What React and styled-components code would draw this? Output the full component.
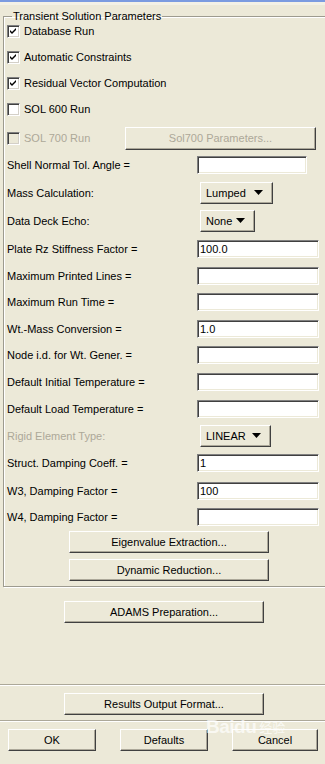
import React from 'react';
import styled, { createGlobalStyle, css } from 'styled-components';

const GlobalStyle = createGlobalStyle`
  html, body {
    margin: 0;
    padding: 0;
    background: #ece9d8;
    overflow: hidden;
  }
  body {
    font-family: "Liberation Sans", Arial, sans-serif;
    font-size: 11px;
    color: #000;
  }
`;

const Window = styled.div`
  position: relative;
  width: 325px;
  height: 764px;
  overflow: hidden;
  background: #ece9d8;
  display: flex;
  flex-direction: column;
`;

const TopEdge = styled.div`
  height: 2px;
  background: #7b9be0;
  border-bottom: 3px solid #f3f1e6;
`;

const Group = styled.fieldset`
  margin: 5px 0 0 3px;
  padding: 0 0 5px 3px;
  width: 330px;
  box-sizing: border-box;
  border: 1px solid #9d9b8f;
  box-shadow: inset 1px 1px 0 #fff, 1px 1px 0 #fff;
  min-inline-size: 0;
`;

const Legend = styled.legend`
  padding: 0 1px;
  margin-left: 5px;
  line-height: 12px;
  font-size: 11px;
`;

const CheckList = styled.div`
  display: flex;
  flex-direction: column;
  gap: 8px;
`;

const CheckRow = styled.div`
  display: grid;
  grid-template-columns: ${p => (p.$withButton ? '118px 191px' : 'auto')};
  align-items: center;
  height: ${p => (p.$withButton ? '24px' : '18px')};
`;

const CheckItem = styled.label`
  display: flex;
  align-items: center;
  gap: 4px;
  color: ${p => (p.$disabled ? '#aca899' : '#000')};
`;

const Box = styled.span`
  width: 13px;
  height: 13px;
  box-sizing: border-box;
  display: inline-flex;
  align-items: center;
  justify-content: center;
  background: ${p => (p.$disabled ? '#ece9d8' : '#fff')};
  border: 1px solid;
  border-color: #808080 #fff #fff #808080;
  box-shadow: inset 1px 1px 0 #404040, inset -1px -1px 0 #d4d0c8;
`;

const FieldList = styled.div`
  margin-top: 1px;
  display: flex;
  flex-direction: column;
`;

const FieldRow = styled.div`
  display: grid;
  grid-template-columns: 190px auto;
  align-items: center;
  height: ${p => p.$h}px;
`;

const Label = styled.span`
  color: ${p => (p.$disabled ? '#aca899' : '#000')};
  white-space: nowrap;
`;

const Input = styled.input`
  box-sizing: border-box;
  width: ${p => p.$w}px;
  height: 18px;
  margin: 0;
  padding: 0 0 0 2px;
  font-family: "Liberation Sans", Arial, sans-serif;
  font-size: 11px;
  color: #000;
  background: #fff;
  border: 1px solid;
  border-color: #808080 #fff #fff #808080;
  box-shadow: inset 1px 1px 0 #404040, inset -1px -1px 0 #ece9d8;
  outline: none;
`;

const raised = css`
  box-sizing: border-box;
  margin: 0;
  background: #ece9d8;
  font-family: "Liberation Sans", Arial, sans-serif;
  font-size: 11px;
  border: 1px solid;
  border-color: #fff #404040 #404040 #fff;
  box-shadow: inset -1px -1px 0 #aca899;
`;

const PushButton = styled.button`
  ${raised};
  width: ${p => p.$w}px;
  height: ${p => p.$h || 22}px;
  padding: 0;
  color: ${p => (p.disabled ? '#aca899' : '#000')};
  margin-left: ${p => p.$left || 0}px;
  margin-top: ${p => p.$top || 0}px;
`;

const Dropdown = styled.button`
  ${raised};
  width: ${p => p.$w}px;
  height: 22px;
  margin-left: 3px;
  padding: 0 9px 0 5px;
  display: flex;
  align-items: center;
  justify-content: space-between;
  color: #000;
`;

const ButtonColumn = styled.div`
  display: flex;
  flex-direction: column;
  padding-left: 62px;
  margin-top: 1px;
`;

const Separator = styled.div`
  height: 1px;
  background: #aca899;
  border-bottom: 1px solid #fff;
  margin-top: ${p => p.$top}px;
`;

const Footer = styled.div`
  display: flex;
  gap: 24px;
  padding-left: 8px;
  margin-top: 7px;
`;

const Watermark = styled.div`
  position: absolute;
  left: 206px;
  top: 717px;
  color: rgba(255, 255, 255, 0.7);
  font-family: "Liberation Sans", "Noto Sans CJK SC", sans-serif;
  pointer-events: none;
  display: flex;
  align-items: flex-end;
  gap: 3px;
  line-height: 1;
  span.bai {
    font-size: 19px;
    font-weight: bold;
    letter-spacing: -0.5px;
  }
  span.jy {
    font-size: 13px;
    margin-bottom: 2px;
  }
`;

const CheckMark = () => (
  <svg width="7" height="7" viewBox="0 0 7 7">
    <path d="M0 2 L2 4 L6 0 L6 2 L2 6 L0 4 Z" fill="#000" />
  </svg>
);

const Arrow = () => (
  <svg width="9" height="5" viewBox="0 0 9 5">
    <path d="M0 0 H9 L4.5 5 Z" fill="#000" />
  </svg>
);

const Checkbox = ({ checked, disabled, children }) => (
  <CheckItem $disabled={disabled}>
    <Box $disabled={disabled}>{checked && <CheckMark />}</Box>
    {children}
  </CheckItem>
);

const fields = [
  { label: 'Shell Normal Tol. Angle =', h: 28, input: 110 },
  { label: 'Mass Calculation:', h: 27, menu: 'Lumped', w: 73 },
  { label: 'Data Deck Echo:', h: 29, menu: 'None', w: 55 },
  { label: 'Plate Rz Stiffness Factor =', h: 28, input: 122, value: '100.0' },
  { label: 'Maximum Printed Lines =', h: 26, input: 122 },
  { label: 'Maximum Run Time =', h: 26, input: 122 },
  { label: 'Wt.-Mass Conversion =', h: 27, input: 122, value: '1.0' },
  { label: 'Node i.d. for Wt. Gener. =', h: 26, input: 122 },
  { label: 'Default Initial Temperature =', h: 27, input: 122 },
  { label: 'Default Load Temperature =', h: 27, input: 122 },
  { label: 'Rigid Element Type:', h: 27, menu: 'LINEAR', w: 71, disabled: true },
  { label: 'Struct. Damping Coeff. =', h: 28, input: 122, value: '1' },
  { label: 'W3, Damping Factor =', h: 27, input: 122, value: '100' },
  { label: 'W4, Damping Factor =', h: 26, input: 122 },
];

export default function App() {
  return (
    <Window>
      <GlobalStyle />
      <TopEdge />
      <Group>
        <Legend>Transient Solution Parameters</Legend>
        <CheckList>
          <CheckRow>
            <Checkbox checked>Database Run</Checkbox>
          </CheckRow>
          <CheckRow>
            <Checkbox checked>Automatic Constraints</Checkbox>
          </CheckRow>
          <CheckRow>
            <Checkbox checked>Residual Vector Computation</Checkbox>
          </CheckRow>
          <CheckRow>
            <Checkbox>SOL 600 Run</Checkbox>
          </CheckRow>
          <CheckRow $withButton>
            <Checkbox disabled>SOL 700 Run</Checkbox>
            <PushButton disabled $w={191} $h={23}>
              Sol700 Parameters...
            </PushButton>
          </CheckRow>
        </CheckList>
        <FieldList>
          {fields.map(f => (
            <FieldRow key={f.label} $h={f.h}>
              <Label $disabled={f.disabled}>{f.label}</Label>
              {f.menu ? (
                <Dropdown $w={f.w}>
                  <span>{f.menu}</span>
                  <Arrow />
                </Dropdown>
              ) : (
                <Input $w={f.input} readOnly defaultValue={f.value || ''} />
              )}
            </FieldRow>
          ))}
        </FieldList>
        <ButtonColumn>
          <PushButton $w={200}>Eigenvalue Extraction...</PushButton>
          <PushButton $w={200} $top={6}>
            Dynamic Reduction...
          </PushButton>
        </ButtonColumn>
      </Group>
      <PushButton $w={200} $left={64} $top={14}>
        ADAMS Preparation...
      </PushButton>
      <Separator $top={61} />
      <PushButton $w={200} $left={64} $top={7}>
        Results Output Format...
      </PushButton>
      <Separator $top={5} />
      <Footer>
        <PushButton $w={88}>OK</PushButton>
        <PushButton $w={88}>Defaults</PushButton>
        <PushButton $w={86}>Cancel</PushButton>
      </Footer>
      <Watermark>
        <span className="bai">Baidu</span>
        <span className="jy">经验</span>
      </Watermark>
    </Window>
  );
}
